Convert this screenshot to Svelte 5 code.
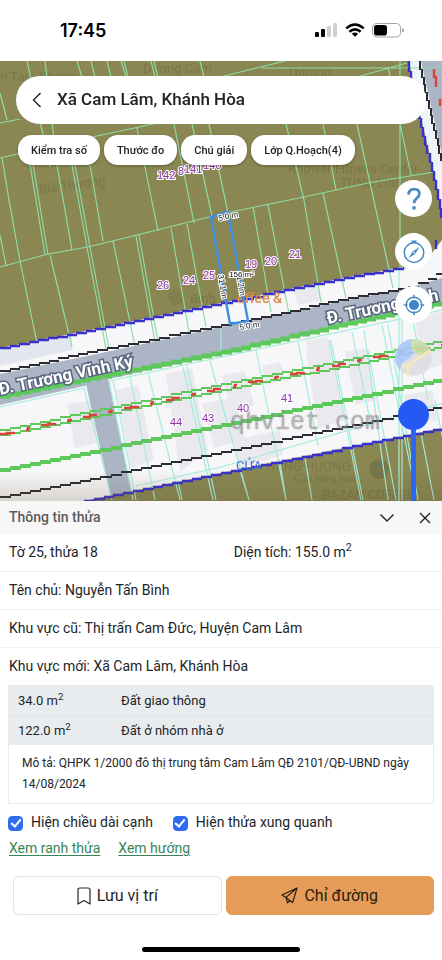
<script>
  function stair(points, step = 9, joined = false) {
    let d = `M${points[0][0]} ${points[0][1]}`;
    for (let i = 1; i < points.length; i++) {
      const [x0, y0] = points[i - 1];
      const [x1, y1] = points[i];
      const flat = Math.abs(x1 - x0) > Math.abs(y1 - y0);
      const run = Math.max(Math.abs(x1 - x0), Math.abs(y1 - y0));
      const count = Math.max(1, Math.round(run / step));
      for (let k = 1; k <= count; k++) {
        const x = Math.round(x0 + ((x1 - x0) * k) / count);
        const y = Math.round(y0 + ((y1 - y0) * k) / count);
        if (joined) d += flat ? `H${x}V${y}` : `V${y}H${x}`;
        else d += flat ? `H${x + 1}M${x} ${y}` : `V${y + 1}M${x} ${y}`;
      }
    }
    return d;
  }

  const northEdge = stair([[0, 348], [105, 327], [221, 303], [284, 290], [344, 278], [403, 267], [428, 258], [443, 239]], 10);
  const eastEdge = stair([[409, 61], [421, 118], [436, 180], [443, 217]], 9);
  const southEdge = stair([[84, 501], [221, 473], [443, 428]], 10);
  const roadTop = stair([[0, 371], [97, 350], [221, 325], [271, 315], [338, 300], [408, 287], [428, 279], [443, 268]], 10);
  const roadEast = stair([[420, 61], [434, 123], [443, 160]], 8);
  const south = stair([[0, 497], [221, 452], [443, 406]], 10);
  const greenWide = stair([[0, 396], [221, 352], [338, 325], [394, 313], [443, 302]], 10);
  const greenMid = stair([[0, 470], [221, 425], [443, 379]], 10);
  const greenThinA = stair([[0, 430], [221, 384], [394, 350], [443, 340]], 10);
  const greenThinB = stair([[0, 435], [221, 390], [398, 355], [443, 346]], 10);
  const redLine = stair([[0, 434], [221, 388], [394, 353], [443, 344]], 7, true);

  const plots =
    'M0 267L48 254L88 247L137 235L221 214L304 197L368 183L434 172' +
    'M0 158L17 154L97 136L153 124L220 108M0 123L20 119M220 77L285 61M357 77L407 63M262 68H442M400 61V270M388 67L411 175' +
    'M0 93L7 120M2 158L9 200L20 261L37 343M27 61L50 167' +
    'M30 164L45 255M33 164L48 255M50 255L72 347M45 61L57 165L72 250M77 61L82 77M91 61L95 77M107 61L111 77' +
    'M72 165L87 247M75 165L90 247M87 247L106 349M90 247L109 349M90 165L103 241M113 241L135 346M136 236L155 342M139 235L158 342' +
    'M121 61L126 77M124 61L128 77M151 61L155 77M154 61L158 77M200 61L204 77' +
    'M0 235L6 265M137 128L158 231M174 124L194 223M192 124L212 216M209 124L228 213M171 228L189 332M187 224L206 327' +
    'M286 124L304 200L321 302M323 124L336 190M357 124L376 210L393 288M323 193L346 298M253 207L271 312M268 205L289 314';

  const lowerPlots =
    'M0 407L84 388L112 500M109 381L443 310M109 381L133 500M113 380L136 500M130 377L155 500M148 373L180 500M178 480L182 500M183 367L213 500M187 366L216 500' +
    'M221 328V355M210 361L249 500M256 350L286 500M298 341L318 446M329 340L361 500M331 340L363 500M352 332L372 430' +
    'M364 330L388 500M368 350L396 500M382 325L413 480M388 325L418 500M399 270V501M402 320V500M413 320L428 400M421 433L434 500M435 400L443 440' +
    'M136 486L221 467L443 403M240 470L249 500M280 462L286 500M305 458L312 500';

  const blocks = [
    '67,404 92,400 97,443 75,448', '116,390 138,385 154,460 131,468', '166,374 192,368 208,450 180,472',
    '202,404 235,397 245,440 214,448', '222,375 245,371 254,405 232,412', '235,440 280,430 283,455 239,468',
    '306,352 330,344 345,420 318,428', '292,288 316,282 322,300 298,305', '345,352 366,348 376,400 356,405',
    '306,341 328,337 330,348 308,353', '415,318 442,312 442,365 424,370', '404,395 432,390 438,420 410,424',
    '262,366 280,362 286,380 266,385'
  ];

  const lots = [
    { x: 157, y: 179, n: '142' }, { x: 178, y: 175, n: '8' }, { x: 184, y: 173, n: '141' }, { x: 203, y: 169, n: '140' },
    { x: 157, y: 289, n: '26' }, { x: 183, y: 284, n: '24' }, { x: 203, y: 279, n: '25' },
    { x: 245, y: 268, n: '19' }, { x: 265, y: 265, n: '20' }, { x: 289, y: 258, n: '21' },
    { x: 170, y: 426, n: '44' }, { x: 202, y: 422, n: '43' }, { x: 237, y: 412, n: '40' }, { x: 281, y: 402, n: '41' }
  ];

  const chips = ['Kiểm tra số', 'Thước đo', 'Chú giải', 'Lớp Q.Hoạch(4)'];
  const zones = [
    { area: '34.0', use: 'Đất giao thông' },
    { area: '122.0', use: 'Đất ở nhóm nhà ở' }
  ];

  let place = $state('Xã Cam Lâm, Khánh Hòa');
  let opacity = $state(100);
  let showEdges = $state(true);
  let showNeighbours = $state(true);
</script>

<main class="app">
  <header class="status">
    <time>17:45</time>
    <div class="signals">
      <svg width="24" height="15" viewBox="0 0 24 15" aria-hidden="true">
        <rect x="1" y="9" width="4" height="5" rx="1" />
        <rect x="7" y="6" width="4" height="8" rx="1" />
        <rect x="13" y="3" width="4" height="11" rx="1" fill="#d0d0d0" />
        <rect x="19" y="0" width="4" height="14" rx="1" fill="#d0d0d0" />
      </svg>
      <svg width="20" height="15" viewBox="0 0 20 15" aria-hidden="true">
        <g fill="none" stroke="#000" stroke-width="2.6">
          <path d="M1.2 5.4Q10-2.4 18.8 5.4" />
          <path d="M4.4 8.8Q10 3.8 15.6 8.8" />
        </g>
        <path d="M10 13.8L6.8 10.8Q10 8.4 13.2 10.8Z" />
      </svg>
      <svg width="32" height="15" viewBox="0 0 32 15" aria-hidden="true">
        <rect x="0.5" y="0.5" width="28" height="13.5" rx="4.2" fill="none" stroke="#a3a3a3" />
        <rect x="2" y="2" width="13" height="10.5" rx="2.8" />
        <path d="M30 5Q32 5.4 32 7.2Q32 9 30 9.4Z" fill="#a3a3a3" />
      </svg>
    </div>
  </header>

  <section class="map" aria-label="Bản đồ">
    <svg class="canvas" viewBox="0 61 442 440" preserveAspectRatio="xMidYMid slice" role="img" aria-label="Thửa đất">
      <defs>
        <linearGradient id="shade" x1="0" y1="0" x2="0" y2="1">
          <stop offset="0" stop-color="#5f5530" stop-opacity="0" />
          <stop offset="1" stop-color="#5f5530" stop-opacity="0.2" />
        </linearGradient>
      </defs>
      <rect y="61" width="442" height="440" fill="#f7f6f8" />
      <path d="M0 346L72 332V350L0 366Z" fill="#e3e6ef" />
      {#each blocks as b}<polygon points={b} fill="#e9e9ee" />{/each}
      <path d="M0 374L97 354L221 327L338 302L408 288L442 278V303L338 326L221 354L109 379L84 386L0 405Z" fill="#abb5c6" />
      <path d="M86 384L108 379L134 501H112Z" fill="#abb5c6" />
      <path d="M0 61H409L421 118L436 180L442 215V240L428 258L403 267L344 278L221 303L105 327L0 348Z" fill="#8a8752" />
      <path d="M84 501L221 473L442 428V501Z" fill="#8a8752" />
      <path d="M409 61H421L442 158V215L436 180Z" fill="#eef5fa" />
      <path d="M421 61H442V155Z" fill="#abb5c6" />

      <g class="faint">
        <text x="0" y="81">ri Tam Phước</text>
        <text x="143" y="73">Dương Cam</text>
        <text x="287" y="77">Thirong</text>
        <text x="40" y="194" transform="rotate(-8 40 194)">Bùi Thương</text>
        <text x="288" y="173">Knower Fitness Center</text>
        <text x="340" y="187">TUNG Linh</text>
        <text x="266" y="471">HÀNG HƯƠNG</text>
        <text class="small" x="294" y="482">Cửa hàng hoa</text>
        <text x="322" y="499">BAZAN COFFEE</text>
        <circle cx="379" cy="469" r="10" />
        <circle cx="176" cy="297" r="8" opacity="0.5" />
        <text x="190" y="303">Bình</text>
      </g>
      <circle cx="379" cy="469" r="5" fill="none" stroke="#55746a" stroke-width="2" opacity="0.6" />

      <path d={plots} class="plots" />
      <path d={lowerPlots} class="lower" />
      <path d={greenWide} class="green wide" />
      <path d={greenMid} class="green mid" />
      <path d={greenThinA} class="green thin" />
      <path d={greenThinB} class="green thin" />
      <path d={redLine} class="red" />
      <path d="M434 69V77H436V87M440 99V106" class="red solid" />
      <path d={roadTop} class="black" />
      <path d={roadEast} class="black" />
      <path d={south} class="black" />
      <path d={northEdge} class="blue" />
      <path d={eastEdge} class="blue" />
      <path d={southEdge} class="blue" />
      <rect y="471" width="442" height="30" fill="url(#shade)" />

      <text class="cafe" x="282" y="303" text-anchor="end">offee &amp;</text>
      <text class="shop" x="236" y="470">CỬA</text>
      <text class="mark" x="230" y="429">qhviet.com</text>
      <text class="street" x="0" y="395" transform="rotate(-12 0 395)">Đ. Trương Vĩnh Ký</text>
      <text class="street" x="328" y="324" transform="rotate(-12 328 324)">Đ. Trương Vĩnh</text>

      <path d="M211 217L228 212L248 321L230 324Z" fill="none" stroke="#3d8fe6" stroke-width="2.4" />
      {#each lots as lot}<text class="lot" x={lot.x} y={lot.y}>{lot.n}</text>{/each}
      <text class="edge" x="219" y="221" transform="rotate(-12 219 221)">5.0 m</text>
      <text class="edge" x="240" y="330" transform="rotate(-10 240 330)">5.0 m</text>
      <text class="edge" x="218" y="275" transform="rotate(80 218 275)">31.1 m</text>
      <text class="edge" x="236" y="272" transform="rotate(80 236 272)">31.2 m</text>
      <text class="edge" x="229" y="277">156 m²</text>
    </svg>

    <div class="top">
      <form class="search" onsubmit={(e) => e.preventDefault()}>
        <button type="button" class="back" aria-label="Quay lại">
          <svg width="10" height="16" viewBox="0 0 10 16"><path d="M8.5 1L1.5 8L8.5 15" /></svg>
        </button>
        <input type="text" aria-label="Tìm kiếm" bind:value={place} />
      </form>
      <nav class="chips">
        {#each chips as chip}<button type="button">{chip}</button>{/each}
      </nav>
    </div>

    <div class="tools">
      <button type="button" aria-label="Trợ giúp">
        <svg width="20" height="24" viewBox="0 0 20 24">
          <path d="M4.6 7.6Q5 2.2 10 2.2Q15.4 2.2 15.4 6.8Q15.4 9.2 12.6 11.4Q10 13.4 10 16.2" fill="none" stroke="#4a8ac4" stroke-width="2.8" />
          <circle cx="10" cy="20.8" r="1.9" fill="#4a8ac4" />
        </svg>
      </button>
      <button type="button" aria-label="La bàn">
        <svg width="24" height="24" viewBox="0 0 24 24">
          <circle cx="12" cy="12.6" r="9.8" fill="none" stroke="#4a8ac4" stroke-width="1.5" />
          <path d="M9.5 1.6H14.5" stroke="#4a8ac4" stroke-width="2.2" />
          <path d="M17.6 7L13.2 13.8L6.4 18.2L10.8 11.4Z" fill="#3f86c6" />
          <circle cx="12" cy="12.6" r="0.8" fill="#fff" />
        </svg>
      </button>
      <button type="button" aria-label="Vị trí của tôi">
        <svg width="22" height="22" viewBox="0 0 22 22">
          <circle cx="11" cy="11" r="7.8" fill="none" stroke="#4a8ac4" stroke-width="1.4" />
          <circle cx="11" cy="11" r="5" fill="#3f86c6" />
          <path d="M11 0.8V4.6M11 17.4V21.2M0.8 11H4.6M17.4 11H21.2" stroke="#4a8ac4" stroke-width="1.6" />
        </svg>
      </button>
      <button type="button" class="layer" aria-label="Lớp nền">
        <svg width="37" height="37" viewBox="0 0 37 37">
          <rect width="37" height="37" fill="#dddde3" />
          <path d="M0 0H17L16 9L19 14L14 20L8 23L5 30L0 32Z" fill="#a9c6fa" />
          <path d="M17 0H37V12L27 17L19 13L16 8Z" fill="#c9dfa8" />
          <path d="M12 37L14 26L37 10M6 27L14 26" fill="none" stroke="#f3e8b4" stroke-width="3" />
        </svg>
      </button>
      <input class="fade" type="range" min="0" max="100" aria-label="Độ mờ" bind:value={opacity} />
    </div>
  </section>

  <section class="panel">
    <div class="head">
      <h2>Thông tin thửa</h2>
      <button type="button" aria-label="Thu gọn">
        <svg width="16" height="10" viewBox="0 0 16 10"><path d="M1.5 1.5L8 8L14.5 1.5" /></svg>
      </button>
      <button type="button" aria-label="Đóng">
        <svg width="12" height="12" viewBox="0 0 12 12"><path d="M1 1L11 11M11 1L1 11" /></svg>
      </button>
    </div>
    <div class="row split"><span>Tờ 25, thửa 18</span><span>Diện tích: 155.0 m<sup>2</sup></span></div>
    <div class="row">Tên chủ: Nguyễn Tấn Bình</div>
    <div class="row">Khu vực cũ: Thị trấn Cam Đức, Huyện Cam Lâm</div>
    <div class="row last">Khu vực mới: Xã Cam Lâm, Khánh Hòa</div>

    <div class="plan">
      <table>
        <tbody>
          {#each zones as zone}
            <tr><td class="area">{zone.area} m<sup>2</sup></td><td>{zone.use}</td></tr>
          {/each}
        </tbody>
      </table>
      <p>Mô tả: QHPK 1/2000 đô thị trung tâm Cam Lâm QĐ 2101/QĐ-UBND ngày 14/08/2024</p>
    </div>

    <div class="options">
      <label><input type="checkbox" bind:checked={showEdges} />Hiện chiều dài cạnh</label>
      <label><input type="checkbox" bind:checked={showNeighbours} />Hiện thửa xung quanh</label>
    </div>
    <div class="links"><a href="#ranh">Xem ranh thửa</a><a href="#huong">Xem hướng</a></div>

    <div class="actions">
      <button type="button">
        <svg width="14" height="18" viewBox="0 0 14 18"><path d="M1 3Q1 1 3 1H11Q13 1 13 3V17L7 13.6L1 17Z" /></svg>
        Lưu vị trí
      </button>
      <button type="button" class="go">
        <svg width="17" height="17" viewBox="0 0 17 17"><path d="M16 1L1 8L5 10.4L11.6 15.6ZM16 1L5 10.4L6.6 16L8.6 13.2" /></svg>
        Chỉ đường
      </button>
    </div>
  </section>
  <div class="home"></div>
</main>

<style>
  :global(body) { margin: 0; background: #fff; }
  .app { font-family: Roboto, "Noto Sans", sans-serif; color: #212529; background: #fff; min-height: 100vh; display: flex; flex-direction: column; }
  button { font: inherit; color: inherit; border: 0; background: none; padding: 0; margin: 0; cursor: pointer; }
  svg { display: block; }

  .status { height: 61px; padding: 0 38px 0 60px; box-sizing: border-box; display: flex; align-items: center; justify-content: space-between; }
  time { font: 600 18px Inter, sans-serif; color: #000; }
  .signals { display: flex; gap: 7px; }

  .map { position: relative; height: 440px; overflow: hidden; background: #8a8752; }
  .canvas { width: 100%; height: 100%; }
  .plots { fill: none; stroke: #8fdba6; stroke-width: 1.2; }
  .lower { fill: none; stroke: #a4ecd9; stroke-width: 1.2; }
  .green { fill: none; stroke: #5cc95a; }
  .wide { stroke-width: 5; }
  .mid { stroke-width: 4; }
  .thin { stroke-width: 1.8; }
  .red { fill: none; stroke: #d8453c; stroke-width: 2.4; stroke-dasharray: 16 14 6 14; }
  .solid { stroke-dasharray: none; }
  .black { fill: none; stroke: #2d2c30; stroke-width: 2; }
  .blue { fill: none; stroke: #3a30cc; stroke-width: 2.4; }
  .faint { fill: #5e5a33; opacity: 0.34; font-size: 13px; }
  .faint .small { font-size: 10px; }
  .cafe { font-size: 14px; font-weight: 500; fill: #dc8a4a; }
  .shop { font-size: 13px; fill: #3d6fd8; }
  .mark { font: 25px "Liberation Mono", monospace; fill: #8a868a; opacity: 0.6; text-shadow: 0 0 2px #8a868a; }
  .street { font-size: 17px; font-weight: 700; fill: #fff; stroke: #59677e; stroke-width: 3; paint-order: stroke; }
  .lot { font: 11px "Liberation Sans", sans-serif; fill: #8e2fa8; stroke: #fff; stroke-width: 2; paint-order: stroke; }
  .edge { font: 8px "Liberation Sans", sans-serif; fill: #111; stroke: #fff; stroke-width: 2; paint-order: stroke; }

  .top { position: absolute; inset: 15px 16px auto; }
  .search { height: 48px; border-radius: 24px; background: #fff; display: flex; align-items: center; padding: 0 16px; }
  .back svg, .head svg { fill: none; stroke: #222; stroke-width: 1.4; }
  .search input { flex: 1; min-width: 0; margin: 0 0 2px 15px; padding: 0; border: 0; outline: 0; background: none; font: 500 17px Roboto, sans-serif; color: #212121; }
  .chips { display: flex; gap: 4px; padding: 11px 2px 0; }
  .chips button { height: 30px; padding: 0 13px; border-radius: 14px; background: #fff; font-size: 11px; font-weight: 500; white-space: nowrap; box-shadow: 0 1px 3px rgb(0 0 0 / 0.3); }

  .tools { position: absolute; top: 119px; right: 10px; display: flex; flex-direction: column; align-items: center; gap: 16px; }
  .tools button { width: 37px; height: 37px; border-radius: 50%; background: #fff; display: grid; place-items: center; overflow: hidden; }
  .tools .layer { opacity: 0.9; }
  .fade { appearance: none; writing-mode: vertical-lr; direction: rtl; width: 31px; height: 150px; margin: 7px 0 0; background: none; }
  .fade::-webkit-slider-runnable-track { width: 5px; height: 100%; background: #2b67f6; border-radius: 3px; }
  .fade::-webkit-slider-thumb { appearance: none; width: 31px; height: 31px; margin-left: -13px; border-radius: 50%; background: #2559f4; }

  .panel { font-size: 14px; }
  .head { height: 33px; padding: 0 11px 0 9px; background: #f7f7f7; display: flex; align-items: center; gap: 24px; }
  .head h2 { flex: 1; margin: 0 0 2px; font-size: 14px; font-weight: 500; color: #5c5c5c; }
  .row { height: 35px; padding: 0 9px 2px; display: flex; align-items: center; border-bottom: 1px solid #efefef; }
  .row.last { border-bottom: 0; }
  .split span { flex: 1; }
  .split span:first-child { flex: 0 0 53%; }
  sup { font-size: 75%; line-height: 0; }

  .plan { margin: 0 8px; border: 1px solid #e9ecef; font-size: 13px; }
  table { width: 100%; border-collapse: collapse; background: #e9ecef; }
  tr + tr { border-top: 1px solid #dfe2e6; }
  td { height: 29px; padding: 0 9px; }
  .area { width: 85px; }
  .plan p { margin: 0; padding: 8px 13px; font-size: 12px; line-height: 21px; }

  .options { display: flex; gap: 20px; padding: 7px 8px 0; line-height: 22px; }
  label { display: flex; align-items: center; gap: 8px; }
  label input { appearance: none; width: 15px; height: 15px; margin: 2px 0 0; border: 1px solid #bbb; border-radius: 4px; background: #fff; display: grid; place-items: center; }
  label input:checked { background: #2f6cf0; border-color: #2f6cf0; }
  label input:checked::after { content: ""; width: 4px; height: 8px; margin-top: -2px; border: solid #fff; border-width: 0 2px 2px 0; transform: rotate(40deg); }
  .links { display: flex; gap: 18px; padding: 4px 9px 0; line-height: 22px; }
  a { color: #3a8557; text-underline-offset: 2px; }

  .actions { display: flex; gap: 4px; padding: 17px 8px 0 13px; }
  .actions button { flex: 1; height: 39px; border: 1px solid #dee2e6; border-radius: 6px; display: flex; align-items: center; justify-content: center; gap: 6px; font-size: 16px; }
  .actions svg { fill: none; stroke: currentColor; stroke-width: 1.2; stroke-linejoin: round; }
  .actions .go { background: #e49c58; border-color: #e49c58; color: #2b1d10; }
  .home { width: 158px; height: 5px; margin: auto auto 8px; border-radius: 3px; background: #000; }
</style>
